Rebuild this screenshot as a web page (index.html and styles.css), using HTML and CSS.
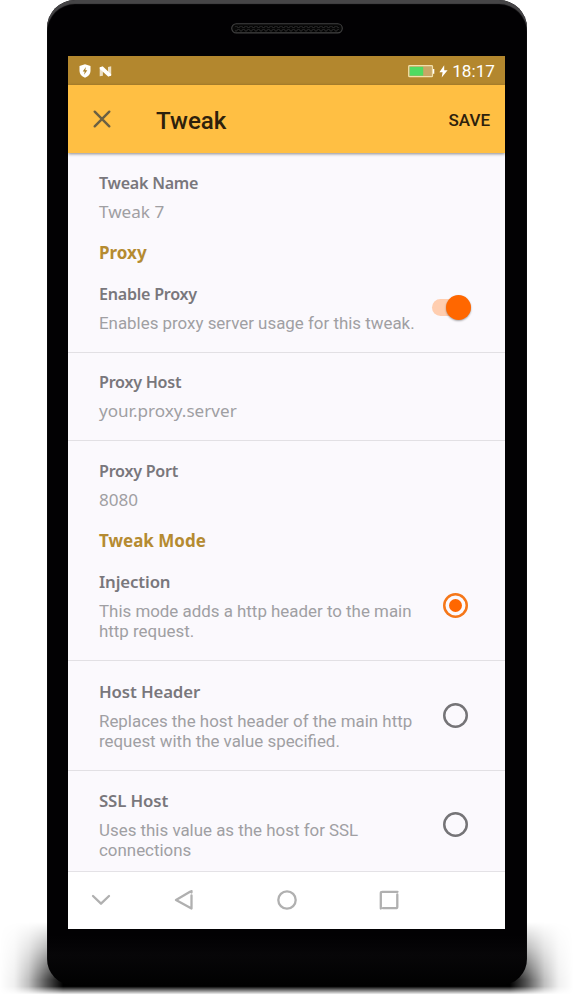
FILE: index.html
```html
<!DOCTYPE html>
<html lang="en">
<head>
<meta charset="utf-8">
<title>Tweak</title>
<link rel="stylesheet" href="styles.css">
</head>
<body>
<div class="stage">
  <div class="ground-shadow"></div>
  <div class="phone">
    <svg class="speaker" width="112" height="11" viewBox="0 0 112 11">
      <defs><pattern id="mesh" width="5" height="6" patternUnits="userSpaceOnUse"><circle cx="2.500" cy="2.500" r="2" fill="#000" stroke="#3b3b3b" stroke-width=".7"/></pattern></defs>
      <rect x=".7" y=".7" width="110.600" height="9.200" rx="4.600" fill="#080808" stroke="#424242" stroke-width="1.100"/>
      <rect x="4" y="3" width="104" height="5.500" fill="url(#mesh)"/>
    </svg>
    <main class="screen">
      <div class="status">
        <svg class="shield" width="12" height="14" viewBox="0 0 12 14"><path d="M6 .3 11.500 2v5c0 3-2 5.300-5.500 6.700C2.500 12.300.5 10 .5 7V2z" fill="#fff"/><path d="M6.900 3 3.700 7.400h2L5.100 10.700 8.300 6.300h-2z" fill="#a98027"/></svg>
        <svg class="nougat" width="13" height="11" viewBox="0 0 13 11"><path d="M.7 1.300 3.900.4v9.400l-3.200.5zM9 .9l3.200-.6v9.300L9 10.500z" fill="#ecdfc4"/><path d="M.8 1.200 3.900.4l8.300 7.900-.2 1.500-2.900.8L.8 3z" fill="#fff"/></svg>
        <svg class="battery" width="27" height="13" viewBox="0 0 27 13"><rect x=".7" y=".7" width="23.800" height="11" rx=".8" fill="#c8a666" stroke="#f2e0ab" stroke-width="1.200"/><rect x="1.700" y="1.800" width="13.500" height="8.900" fill="#4fdb61"/><path d="M25 4h1.300v4.700H25z" fill="#fff"/></svg>
        <svg class="bolt" width="9" height="13" viewBox="0 0 9 13"><path d="M5.200.3.4 7.200h3.200L2.700 12.600 8.600 5.300H5.200z" fill="#fff"/></svg>
        <span class="clock">18:17</span>
      </div>
      <header class="appbar">
        <svg class="close" width="18" height="18" viewBox="0 0 18 18"><path d="M1.700 1.700 16.300 16.300M16.300 1.700 1.700 16.300" stroke="#6b6043" stroke-width="2.400" stroke-linecap="round"/></svg>
        <h1 class="heading"><span>Tweak</span></h1>
        <span class="save">SAVE</span>
      </header>
      <div class="list">
        <section class="row last"><div class="copy"><h2 class="label">Tweak Name</h2><p class="value">Tweak 7</p></div></section>
        <h3 class="group">Proxy</h3>
        <section class="row toggle ruled"><div class="copy"><h2 class="label">Enable Proxy</h2><p class="desc">Enables proxy server usage for this tweak.</p></div><span class="switch"></span></section>
        <section class="row ruled"><div class="copy"><h2 class="label">Proxy Host</h2><p class="value">your.proxy.server</p></div></section>
        <section class="row last"><div class="copy"><h2 class="label">Proxy Port</h2><p class="value">8080</p></div></section>
        <h3 class="group">Tweak Mode</h3>
        <section class="row choice ruled"><div class="copy"><h2 class="label">Injection</h2><p class="desc">This mode adds a http header to the main<br>http request.</p></div><span class="radio checked"></span></section>
        <section class="row choice ruled"><div class="copy"><h2 class="label">Host Header</h2><p class="desc">Replaces the host header of the main http<br>request with the value specified.</p></div><span class="radio"></span></section>
        <section class="row choice"><div class="copy"><h2 class="label">SSL Host</h2><p class="desc">Uses this value as the host for SSL<br>connections</p></div><span class="radio"></span></section>
      </div>
      <nav class="nav">
        <svg width="20" height="20" viewBox="0 0 20 20"><path d="m2 6 8 7.700L18 6"/></svg>
        <svg width="20" height="20" viewBox="0 0 20 20"><path d="M17.500 5.500v13L2 10 16 1.700M17.500 1v1.500"/></svg>
        <svg width="20" height="20" viewBox="0 0 20 20"><circle cx="10" cy="10" r="8.700"/></svg>
        <svg width="20" height="20" viewBox="0 0 20 20"><path d="M1.800 18.500V3.300q0-1.500 1.500-1.500H18.500M18.300 4.500v12.200q0 1.500-1.500 1.500H4"/></svg>
      </nav>
    </main>
  </div>
</div>
</body>
</html>
```
FILE: styles.css
```css
* { box-sizing: border-box; }
body { margin: 0; background: #fff; font-family: Roboto, "Noto Sans", sans-serif; }
h1, h2, h3, p { margin: 0; }
svg { display: block; flex: none; }
.stage { position: relative; width: 573px; height: 1000px; overflow: hidden; padding-left: 47px; }
.ground-shadow {
  position: absolute; left: 0; top: 922px; width: 573px; height: 74px;
  background: linear-gradient(90deg, transparent, rgba(0,0,0,.06) 2.5%, rgba(0,0,0,.25) 5%, rgba(0,0,0,.65) 8%, #000 11%, #000 89%, rgba(0,0,0,.65) 92%, rgba(0,0,0,.25) 95%, rgba(0,0,0,.06) 97.5%, transparent);
  -webkit-mask-image: linear-gradient(transparent, rgba(0,0,0,.4) 35%, #000 78%, #000 87%, transparent 98%);
  mask-image: linear-gradient(transparent, rgba(0,0,0,.4) 35%, #000 78%, #000 87%, transparent 98%);
}
.phone {
  position: relative; width: 480px; height: 985px; border-radius: 28px 28px 26px 26px;
  background: linear-gradient(#020103 95%, #070608 97%, #010101);
  box-shadow: inset 0 4px 1px #464547;
  padding: 23px 22px 0 21px; display: flex; flex-direction: column;
}
.speaker { align-self: center; margin-bottom: 22px; }
.screen { width: 437px; height: 873px; background: #fbf9fd; display: flex; flex-direction: column; }
.status { height: 29px; background: #b3872e; display: flex; align-items: center; padding: 1px 10px 0 11px; color: #fff; }
.nougat { margin-left: 8px; }
.battery { margin-left: auto; }
.bolt { margin-left: 4px; }
.clock { font-size: 17.2px; line-height: 28px; margin-left: 4px; }
.appbar {
  height: 68px; flex: none; background: #ffbf43; display: flex; align-items: center;
  padding: 0 15px 0 25px; box-shadow: 0 1px 3px rgba(0,0,0,.45); position: relative; color: #2d210c;
}
.heading { flex: 1; margin-left: 45px; font-size: 24.1px; font-weight: 500; line-height: 32px; padding-top: 4px; }
.save { font-size: 17px; font-weight: 500; padding-top: 2px; }
.list { flex: none; height: 718px; overflow: hidden; }
.row { display: flex; align-items: center; justify-content: space-between; padding: 17.5px 34px 19px 31px; }
.last { padding-bottom: 20px; }
.toggle { padding-top: 18px; padding-bottom: 19px; }
.choice { padding-top: 18.5px; padding-bottom: 19px; }
.ruled { border-bottom: 1px solid #e2e0e4; }
.copy { white-space: nowrap; }
.label { font: 600 16.1px/24px "Noto Sans", sans-serif; letter-spacing: -.25px; color: #79777c; }
.choice .label { font-size: 16.8px; letter-spacing: -.12px; }
.value, .desc { margin-top: 7px; font-size: 16.9px; line-height: 20px; color: #a09fa3; }
.value { font-family: "Noto Sans", sans-serif; font-size: 17.1px; }
.group { font: 700 17px/22px "Noto Sans", sans-serif; color: #b58b31; padding-left: 31px; }
.switch { width: 39px; height: 17px; border-radius: 9px; background: #ffceb0; position: relative; }
.switch::after { content: ""; position: absolute; right: 0; top: -4px; width: 25px; height: 25px; border-radius: 50%; background: #ff6700; box-shadow: 0 1px 2px rgba(0,0,0,.35); }
.radio { width: 25px; height: 25px; box-shadow: inset 0 0 0 2.500px #757477; border-radius: 50%; margin-right: 3px; display: grid; place-items: center; }
.checked { box-shadow: inset 0 0 0 2.500px #f57719; }
.checked::after { content: ""; width: 13px; height: 13px; border-radius: 50%; background: #ff6700; }
.nav { height: 58px; flex: none; border-top: 1px solid #e4e2e6; background: #fff; display: grid; grid-template-columns: 83px 103px 102px 20px; align-items: center; padding: 0 0 2px 23px; }
.nav svg { fill: none; stroke: #b0b0b0; stroke-width: 2.300; stroke-linecap: round; stroke-linejoin: round; }
```
